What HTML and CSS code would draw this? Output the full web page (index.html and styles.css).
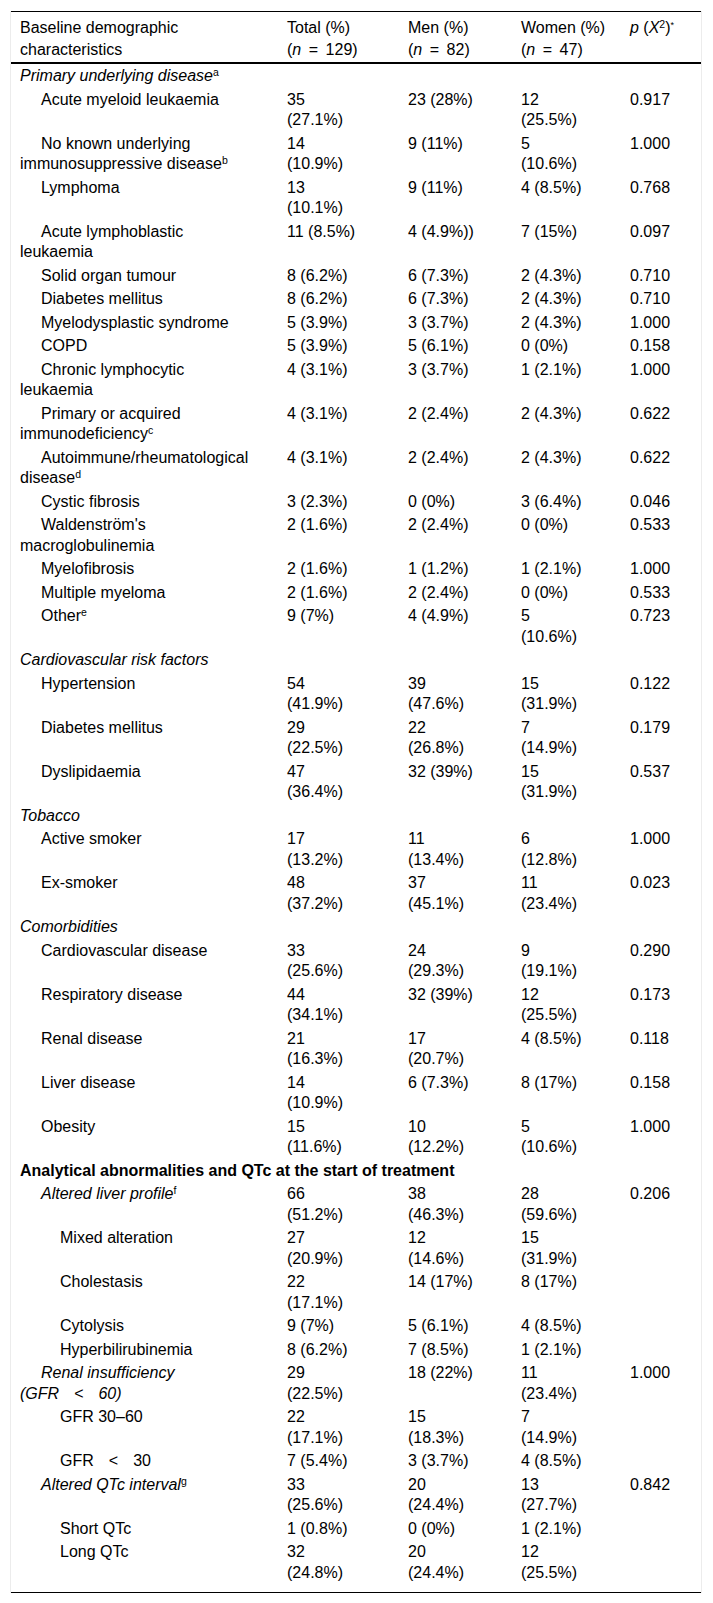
FILE: index.html
```html
<!DOCTYPE html>
<html lang="en">
<head>
<meta charset="utf-8">
<title>Baseline demographic characteristics</title>
<link rel="stylesheet" href="styles.css">
</head>
<body>
<div class="wrap">
<table class="tbl">
  <colgroup>
    <col class="c-label"><col class="c-total"><col class="c-men"><col class="c-women"><col class="c-p">
  </colgroup>
  <thead>
    <tr>
      <th class="label">Baseline demographic characteristics</th>
      <th class="total"><span class="blk">Total (%)</span><span class="blk">(<i>n</i><span class="eq">=</span>129)</span></th>
      <th class="men"><span class="blk">Men (%)</span><span class="blk">(<i>n</i><span class="eq">=</span>82)</span></th>
      <th class="women"><span class="blk">Women (%)</span><span class="blk">(<i>n</i><span class="eq">=</span>47)</span></th>
      <th class="p"><i>p</i> (<i>X</i><sup>2</sup>)<sup class="star">*</sup></th>
    </tr>
  </thead>
  <tbody>
    <tr class="first"><td colspan="5" class="label sec"><i>Primary underlying disease</i><sup>a</sup></td></tr>
    <tr><td class="label l1">Acute myeloid leukaemia</td><td class="total">35 (27.1%)</td><td class="men">23 (28%)</td><td class="women">12 (25.5%)</td><td class="p">0.917</td></tr>
    <tr><td class="label l1">No known underlying immunosuppressive disease<sup>b</sup></td><td class="total">14 (10.9%)</td><td class="men">9 (11%)</td><td class="women">5 (10.6%)</td><td class="p">1.000</td></tr>
    <tr><td class="label l1">Lymphoma</td><td class="total">13 (10.1%)</td><td class="men">9 (11%)</td><td class="women">4 (8.5%)</td><td class="p">0.768</td></tr>
    <tr><td class="label l1">Acute lymphoblastic leukaemia</td><td class="total">11 (8.5%)</td><td class="men">4 (4.9%))</td><td class="women">7 (15%)</td><td class="p">0.097</td></tr>
    <tr><td class="label l1">Solid organ tumour</td><td class="total">8 (6.2%)</td><td class="men">6 (7.3%)</td><td class="women">2 (4.3%)</td><td class="p">0.710</td></tr>
    <tr><td class="label l1">Diabetes mellitus</td><td class="total">8 (6.2%)</td><td class="men">6 (7.3%)</td><td class="women">2 (4.3%)</td><td class="p">0.710</td></tr>
    <tr><td class="label l1">Myelodysplastic syndrome</td><td class="total">5 (3.9%)</td><td class="men">3 (3.7%)</td><td class="women">2 (4.3%)</td><td class="p">1.000</td></tr>
    <tr><td class="label l1">COPD</td><td class="total">5 (3.9%)</td><td class="men">5 (6.1%)</td><td class="women">0 (0%)</td><td class="p">0.158</td></tr>
    <tr><td class="label l1">Chronic lymphocytic leukaemia</td><td class="total">4 (3.1%)</td><td class="men">3 (3.7%)</td><td class="women">1 (2.1%)</td><td class="p">1.000</td></tr>
    <tr><td class="label l1">Primary or acquired immunodeficiency<sup>c</sup></td><td class="total">4 (3.1%)</td><td class="men">2 (2.4%)</td><td class="women">2 (4.3%)</td><td class="p">0.622</td></tr>
    <tr><td class="label l1">Autoimmune/rheumatological disease<sup>d</sup></td><td class="total">4 (3.1%)</td><td class="men">2 (2.4%)</td><td class="women">2 (4.3%)</td><td class="p">0.622</td></tr>
    <tr><td class="label l1">Cystic fibrosis</td><td class="total">3 (2.3%)</td><td class="men">0 (0%)</td><td class="women">3 (6.4%)</td><td class="p">0.046</td></tr>
    <tr><td class="label l1">Waldenström's macroglobulinemia</td><td class="total">2 (1.6%)</td><td class="men">2 (2.4%)</td><td class="women">0 (0%)</td><td class="p">0.533</td></tr>
    <tr><td class="label l1">Myelofibrosis</td><td class="total">2 (1.6%)</td><td class="men">1 (1.2%)</td><td class="women">1 (2.1%)</td><td class="p">1.000</td></tr>
    <tr><td class="label l1">Multiple myeloma</td><td class="total">2 (1.6%)</td><td class="men">2 (2.4%)</td><td class="women">0 (0%)</td><td class="p">0.533</td></tr>
    <tr><td class="label l1">Other<sup>e</sup></td><td class="total">9 (7%)</td><td class="men">4 (4.9%)</td><td class="women">5 (10.6%)</td><td class="p">0.723</td></tr>

    <tr><td colspan="5" class="label sec"><i>Cardiovascular risk factors</i></td></tr>
    <tr><td class="label l1">Hypertension</td><td class="total">54 (41.9%)</td><td class="men">39 (47.6%)</td><td class="women">15 (31.9%)</td><td class="p">0.122</td></tr>
    <tr><td class="label l1">Diabetes mellitus</td><td class="total">29 (22.5%)</td><td class="men">22 (26.8%)</td><td class="women">7 (14.9%)</td><td class="p">0.179</td></tr>
    <tr><td class="label l1">Dyslipidaemia</td><td class="total">47 (36.4%)</td><td class="men">32 (39%)</td><td class="women">15 (31.9%)</td><td class="p">0.537</td></tr>

    <tr><td colspan="5" class="label sec"><i>Tobacco</i></td></tr>
    <tr><td class="label l1">Active smoker</td><td class="total">17 (13.2%)</td><td class="men">11 (13.4%)</td><td class="women">6 (12.8%)</td><td class="p">1.000</td></tr>
    <tr><td class="label l1">Ex-smoker</td><td class="total">48 (37.2%)</td><td class="men">37 (45.1%)</td><td class="women">11 (23.4%)</td><td class="p">0.023</td></tr>

    <tr><td colspan="5" class="label sec"><i>Comorbidities</i></td></tr>
    <tr><td class="label l1">Cardiovascular disease</td><td class="total">33 (25.6%)</td><td class="men">24 (29.3%)</td><td class="women">9 (19.1%)</td><td class="p">0.290</td></tr>
    <tr><td class="label l1">Respiratory disease</td><td class="total">44 (34.1%)</td><td class="men">32 (39%)</td><td class="women">12 (25.5%)</td><td class="p">0.173</td></tr>
    <tr><td class="label l1">Renal disease</td><td class="total">21 (16.3%)</td><td class="men">17 (20.7%)</td><td class="women">4 (8.5%)</td><td class="p">0.118</td></tr>
    <tr><td class="label l1">Liver disease</td><td class="total">14 (10.9%)</td><td class="men">6 (7.3%)</td><td class="women">8 (17%)</td><td class="p">0.158</td></tr>
    <tr><td class="label l1">Obesity</td><td class="total">15 (11.6%)</td><td class="men">10 (12.2%)</td><td class="women">5 (10.6%)</td><td class="p">1.000</td></tr>

    <tr><td colspan="5" class="label sec"><b>Analytical abnormalities and QTc at the start of treatment</b></td></tr>
    <tr><td class="label l1"><i>Altered liver profile</i><sup>f</sup></td><td class="total">66 (51.2%)</td><td class="men">38 (46.3%)</td><td class="women">28 (59.6%)</td><td class="p">0.206</td></tr>
    <tr><td class="label l2">Mixed alteration</td><td class="total">27 (20.9%)</td><td class="men">12 (14.6%)</td><td class="women">15 (31.9%)</td><td class="p"></td></tr>
    <tr><td class="label l2">Cholestasis</td><td class="total">22 (17.1%)</td><td class="men">14 (17%)</td><td class="women">8 (17%)</td><td class="p"></td></tr>
    <tr><td class="label l2">Cytolysis</td><td class="total">9 (7%)</td><td class="men">5 (6.1%)</td><td class="women">4 (8.5%)</td><td class="p"></td></tr>
    <tr><td class="label l2">Hyperbilirubinemia</td><td class="total">8 (6.2%)</td><td class="men">7 (8.5%)</td><td class="women">1 (2.1%)</td><td class="p"></td></tr>
    <tr><td class="label l1"><i>Renal insufficiency <span class="nw">(GFR<span class="lt">&lt;</span>60)</span></i></td><td class="total">29 (22.5%)</td><td class="men">18 (22%)</td><td class="women">11 (23.4%)</td><td class="p">1.000</td></tr>
    <tr><td class="label l2">GFR 30–60</td><td class="total">22 (17.1%)</td><td class="men">15 (18.3%)</td><td class="women">7 (14.9%)</td><td class="p"></td></tr>
    <tr><td class="label l2"><span class="nw">GFR<span class="lt">&lt;</span>30</span></td><td class="total">7 (5.4%)</td><td class="men">3 (3.7%)</td><td class="women">4 (8.5%)</td><td class="p"></td></tr>
    <tr><td class="label l1"><i>Altered QTc interval</i><sup>g</sup></td><td class="total">33 (25.6%)</td><td class="men">20 (24.4%)</td><td class="women">13 (27.7%)</td><td class="p">0.842</td></tr>
    <tr><td class="label l2">Short QTc</td><td class="total">1 (0.8%)</td><td class="men">0 (0%)</td><td class="women">1 (2.1%)</td><td class="p"></td></tr>
    <tr class="last"><td class="label l2">Long QTc</td><td class="total">32 (24.8%)</td><td class="men">20 (24.4%)</td><td class="women">12 (25.5%)</td><td class="p"></td></tr>
  </tbody>
</table>
</div>
</body>
</html>
```

FILE: styles.css
```css
html, body {
  margin: 0;
  padding: 0;
  background: #ffffff;
}

body {
  font-family: "Liberation Sans", Arial, Helvetica, sans-serif;
  font-size: 16px;
  color: #000000;
}

.wrap {
  margin: 11px 11px 0 10px;
  border-left: 1px solid #ececec;
  border-right: 1px solid #ececec;
}

.tbl {
  width: 100%;
  border-collapse: collapse;
  table-layout: fixed;
  border-top: 1px solid #000000;
  border-bottom: 1px solid #000000;
}

.c-label { width: 266px; }
.c-total { width: 121px; }
.c-men { width: 113px; }
.c-women { width: 109px; }
.c-p { width: auto; }

.tbl th,
.tbl td {
  text-align: left;
  vertical-align: top;
  line-height: 20.5px;
  padding: 1.5px 10px;
}

.tbl th {
  font-weight: normal;
  line-height: 21.5px;
  padding-top: 5px;
  padding-bottom: 2px;
  border-bottom: 2px solid #000000;
}

.tbl .label { padding-left: 9px; padding-right: 22px; }
.tbl .total { padding-right: 37px; }
.tbl .men { padding-right: 31px; }
.tbl .women { padding-right: 34px; }
.tbl .sec { padding-right: 10px; }

.tbl tr.first td { padding-top: 2px; }
.tbl tr.last td { padding-bottom: 9px; }

.l1 { text-indent: 21px; }
.l2 { text-indent: 40px; }

.blk {
  display: block;
  white-space: nowrap;
}

.nw { white-space: nowrap; }

.eq {
  margin: 0 7.5px;
}

.lt {
  margin: 0 15px;
}

sup {
  font-size: 10.5px;
  line-height: 0;
  vertical-align: 5px;
}

sup.star {
  font-size: 9px;
  vertical-align: 5px;
}
```
